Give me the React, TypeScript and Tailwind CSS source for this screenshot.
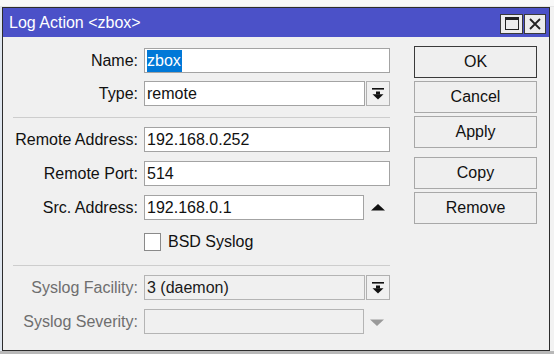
import React from "react";

const DropIcon = ({ color = "#111" }: { color?: string }) => (
  <svg width="12" height="12" viewBox="0 0 12 12">
    <rect x="0" y="0" width="12" height="1.6" fill={color} />
    <rect x="4" y="3.5" width="4" height="3" fill={color} />
    <polygon points="0.5,6.3 11.5,6.3 6,11.5" fill={color} />
  </svg>
);

const Field = ({
  children,
  w = "w-[246px]",
  disabled = false,
}: {
  children?: React.ReactNode;
  w?: string;
  disabled?: boolean;
}) => (
  <div
    className={`${w} h-[25px] border flex items-center pl-[2px] text-[16px] ${
      disabled ? "bg-[#f0f0f0] border-[#b4b4b4] text-[#1a1a1a]" : "bg-white border-[#a3a3a3] text-[#111]"
    }`}
  >
    {children}
  </div>
);

const Row = ({
  label,
  children,
  disabled = false,
  className = "",
}: {
  label: string;
  children: React.ReactNode;
  disabled?: boolean;
  className?: string;
}) => (
  <div className={`flex items-center h-[25px] ${className}`}>
    <div className={`w-[135px] text-right text-[16px] ${disabled ? "text-[#6e6e6e]" : "text-[#111]"}`}>
      {label}
    </div>
    <div className="ml-[6px] flex items-center">{children}</div>
  </div>
);

const Btn = ({ label, def = false, className = "" }: { label: string; def?: boolean; className?: string }) => (
  <div
    className={`w-[123px] h-[32px] flex items-center justify-center text-[16px] text-[#111] bg-[#efefef] border ${
      def ? "border-[#3a3a3a]" : "border-[#a8a8a8]"
    } ${className}`}
  >
    {label}
  </div>
);

export default function App() {
  return (
    <div className="w-[554px] h-[354px] bg-[#f5f5f5] flex flex-col font-['Liberation_Sans',Arial,sans-serif] overflow-hidden">
      <div className="h-[7px] bg-[#f8f8f8] border-b border-[#e6e6e6]" />
      <div className="flex">
        <div className="w-[2px] bg-[#dfe6ef]" />
        <div className="w-[548px] h-[344px] border border-[#2c2c2c] bg-[#f0f0f0] flex flex-col">
          {/* Title bar */}
          <div className="h-[29px] bg-[#4b51c8] flex items-center pl-[6px] pr-[3px]">
            <div className="text-white text-[16px] flex-1 leading-none">Log Action &lt;zbox&gt;</div>
            <div className="flex gap-[1px] mt-[2px]">
              <div className="w-[23px] h-[20px] bg-[#ececec] border border-[#3a3a3a] flex items-center justify-center">
                <div className="w-[14px] h-[13px] border border-[#222] border-t-[3px]" />
              </div>
              <div className="w-[22px] h-[20px] bg-[#ececec] border border-[#3a3a3a] flex items-center justify-center">
                <svg width="12" height="12" viewBox="0 0 12 12">
                  <path d="M1 1 L11 11 M11 1 L1 11" stroke="#222" strokeWidth="1.8" />
                </svg>
              </div>
            </div>
          </div>
          {/* Body */}
          <div className="flex flex-1">
            <div className="w-[411px] flex flex-col pt-[11px]">
              <Row label="Name:">
                <Field>
                  <span className="bg-[#0078d7] text-white h-[22px] leading-[22px] pr-[1px]">zbox</span>
                </Field>
              </Row>
              <Row label="Type:" className="mt-[8px]">
                <Field w="w-[221px]">remote</Field>
                <div className="ml-[1px] w-[24px] h-[25px] border border-[#b0b0b0] bg-[#f0f0f0] flex items-center justify-center">
                  <DropIcon />
                </div>
              </Row>
              <div className="mt-[11px] ml-[10px] w-[377px] h-[1px] bg-[#cdcdcd]" />
              <Row label="Remote Address:" className="mt-[9px]">
                <Field>192.168.0.252</Field>
              </Row>
              <Row label="Remote Port:" className="mt-[9px]">
                <Field>514</Field>
              </Row>
              <Row label="Src. Address:" className="mt-[9px]">
                <Field w="w-[220px]">192.168.0.1</Field>
                <svg className="ml-[7px]" width="14" height="7" viewBox="0 0 14 7">
                  <polygon points="0,6.5 14,6.5 7,0" fill="#111" />
                </svg>
              </Row>
              <div className="flex items-center mt-[13px] h-[18px]">
                <div className="ml-[141px] w-[17px] h-[18px] bg-white border border-[#8a8a8a]" />
                <div className="ml-[7px] text-[16px] text-[#111]">BSD Syslog</div>
              </div>
              <div className="mt-[14px] ml-[10px] w-[377px] h-[1px] bg-[#cdcdcd]" />
              <Row label="Syslog Facility:" disabled className="mt-[9px]">
                <Field w="w-[221px]" disabled>
                  3 (daemon)
                </Field>
                <div className="ml-[1px] w-[24px] h-[25px] border border-[#b0b0b0] bg-[#f0f0f0] flex items-center justify-center">
                  <DropIcon />
                </div>
              </Row>
              <Row label="Syslog Severity:" disabled className="mt-[9px]">
                <Field w="w-[220px]" disabled />
                <svg className="ml-[6px] mt-[1px]" width="14" height="7" viewBox="0 0 14 7">
                  <polygon points="0,0.5 14,0.5 7,7" fill="#9a9a9a" />
                </svg>
              </Row>
            </div>
            <div className="flex flex-col pt-[9px]">
              <Btn label="OK" def />
              <Btn label="Cancel" className="mt-[3px]" />
              <Btn label="Apply" className="mt-[3px]" />
              <Btn label="Copy" className="mt-[9px]" />
              <Btn label="Remove" className="mt-[3px]" />
            </div>
          </div>
        </div>
        <div className="flex-1 bg-[#f2f2f2]" />
      </div>
      <div className="flex-1 bg-[#b8b8b8]" />
    </div>
  );
}
